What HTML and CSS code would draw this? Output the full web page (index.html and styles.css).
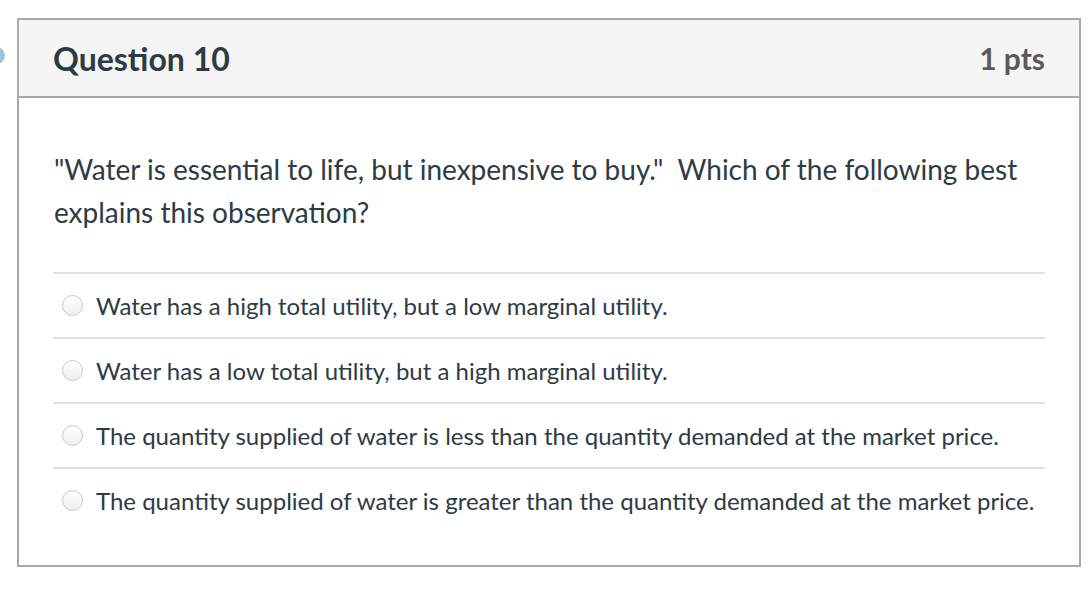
FILE: index.html
```html
<!DOCTYPE html>
<html>
<head>
<meta charset="utf-8">
<link rel="stylesheet" href="styles.css">
</head>
<body>
<span class="edge-dot"></span>
<div class="card">
  <div class="card-header">
    <h2 class="title">Question 10</h2>
    <span class="points">1 pts</span>
  </div>
  <div class="card-body">
    <p class="question">"Water is essential to life, but inexpensive to buy."&nbsp; Which of the following best explains this observation?</p>
    <div class="answers">
      <label class="answer"><span class="radio"></span><span class="answer-text">Water has a high total utility, but a low marginal utility.</span></label>
      <label class="answer"><span class="radio"></span><span class="answer-text">Water has a low total utility, but a high marginal utility.</span></label>
      <label class="answer"><span class="radio"></span><span class="answer-text">The quantity supplied of water is less than the quantity demanded at the market price.</span></label>
      <label class="answer"><span class="radio"></span><span class="answer-text">The quantity supplied of water is greater than the quantity demanded at the market price.</span></label>
    </div>
  </div>
</div>
</body>
</html>
```

FILE: styles.css
```css
html, body {
  margin: 0;
  padding: 0;
  background: #ffffff;
}
body {
  font-family: Lato, "Noto Sans", sans-serif;
  color: #2d3b45;
  padding: 18px 0 0 17px;
  position: relative;
}
.edge-dot {
  position: absolute;
  left: -12px;
  top: 47px;
  width: 17px;
  height: 17px;
  border-radius: 50%;
  background: #9fc3dd;
}
.card {
  width: 1064px;
  box-sizing: border-box;
  border: 2px solid #a9a9a9;
  background: #fff;
}
.card-header {
  height: 78px;
  box-sizing: border-box;
  background: #f5f5f5;
  border-bottom: 2px solid #a9a9a9;
  display: flex;
  align-items: center;
  justify-content: space-between;
  padding: 0 34px 0 34px;
}
.title {
  margin: 0;
  font-size: 32px;
  font-weight: 700;
  color: #2d3b45;
}
.points {
  font-size: 30px;
  font-weight: 700;
  color: #5a5a5a;
}
.card-body {
  padding: 50px 34px 33px 34px;
}
.question {
  margin: 0 0 38px 0;
  font-size: 28px;
  line-height: 43px;
  padding-left: 1px;
}
.answers {
  display: flex;
  flex-direction: column;
}
.answer {
  display: flex;
  align-items: center;
  height: 65px;
  box-sizing: border-box;
  border-top: 2px solid #e0e0e0;
  padding-left: 9px;
  font-size: 24px;
}
.radio {
  width: 19px;
  height: 19px;
  border-radius: 50%;
  border: 1px solid #c8c8c8;
  background: linear-gradient(#ffffff, #eeeeee);
  flex: none;
  margin-right: 13px;
}
```
